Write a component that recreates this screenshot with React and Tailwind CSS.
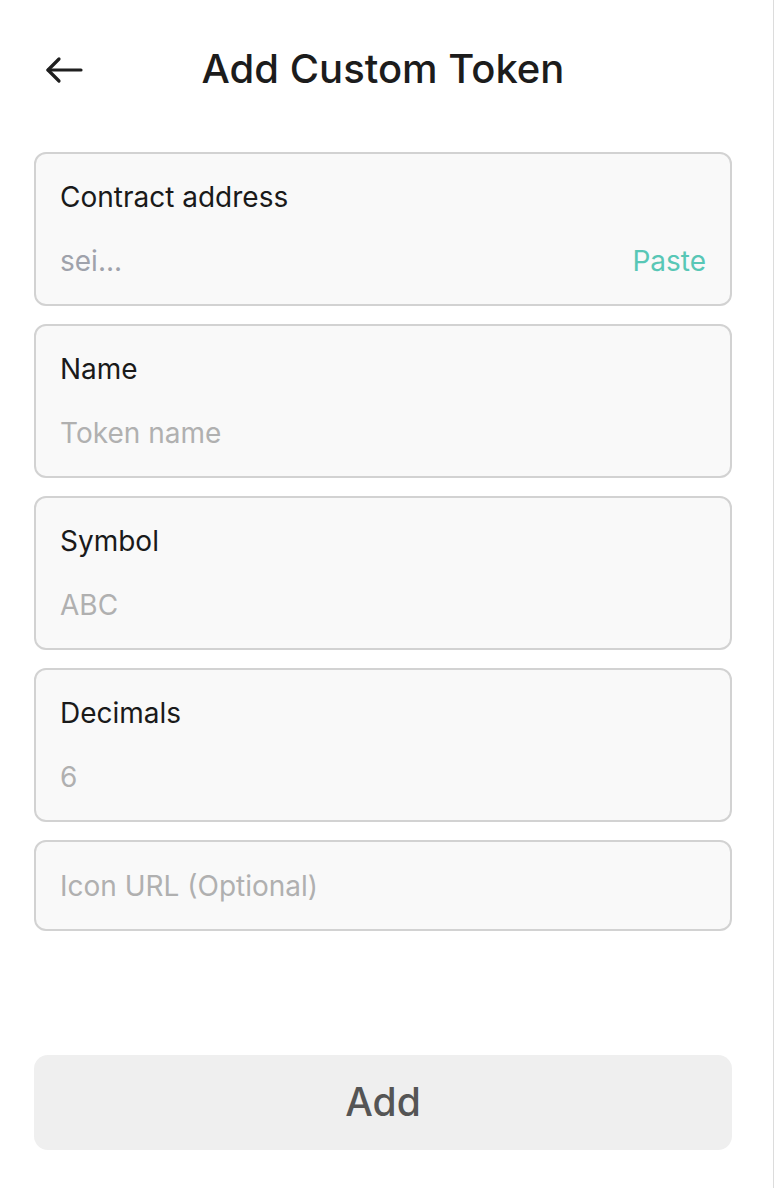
import { useState } from 'react';

const fields = [
  { label: 'Name', placeholder: 'Token name' },
  { label: 'Symbol', placeholder: 'ABC' },
  { label: 'Decimals', placeholder: '6' },
];

const BackArrow = () => (
  <svg width="40" height="30" viewBox="0 0 40 30" fill="none" stroke="#1f1f1f" strokeWidth="3.2" strokeLinecap="round" strokeLinejoin="round">
    <path d="M37 15H4" />
    <path d="M15 4L4 15l11 11" />
  </svg>
);

const App = () => {
  const [address, setAddress] = useState('');

  return (
    <div className="w-[774px] min-h-[1188px] bg-white border-r border-[#dcdcdc] font-['Inter',sans-serif] text-[#1a1a1a]">
      <div className="pl-[34px] pr-[41px]">
        <div className="relative flex items-center justify-center h-[140px] pb-[2px]">
          <button className="absolute left-[10px] top-[55px]">
            <BackArrow />
          </button>
          <h1 className="text-[40px] font-medium text-[#1c1c1c]">Add Custom Token</h1>
        </div>

        <div className="flex flex-col gap-[18px] mt-[12px]">
          <div className="h-[154px] rounded-[12px] border-2 border-[#d2d2d2] bg-[#f9f9f9] px-[24px] pt-[26px]">
            <div className="text-[28px] leading-[34px]">Contract address</div>
            <div className="flex items-center justify-between mt-[30px]">
              <input
                value={address}
                onChange={(e) => setAddress(e.target.value)}
                placeholder="sei..."
                className="bg-transparent outline-none text-[28px] leading-[34px] w-[400px] placeholder:text-[#9fa2ab]"
              />
              <span className="text-[28px] leading-[34px] text-[#58c7b6]">Paste</span>
            </div>
          </div>

          {fields.map((f) => (
            <div key={f.label} className="h-[154px] rounded-[12px] border-2 border-[#d2d2d2] bg-[#f9f9f9] px-[24px] pt-[26px]">
              <div className="text-[28px] leading-[34px]">{f.label}</div>
              <input
                placeholder={f.placeholder}
                className="mt-[30px] bg-transparent outline-none text-[28px] leading-[34px] w-full placeholder:text-[#b0b0b0]"
              />
            </div>
          ))}

          <div className="h-[91px] rounded-[12px] border-2 border-[#d2d2d2] bg-[#f9f9f9] px-[24px] flex items-center">
            <input
              placeholder="Icon URL (Optional)"
              className="bg-transparent outline-none text-[28px] leading-[34px] w-full placeholder:text-[#b0b0b0]"
            />
          </div>
        </div>

        <button className="mt-[124px] w-full h-[95px] rounded-[14px] bg-[#efefef] text-[39px] font-medium text-[#555555]">
          Add
        </button>
      </div>
    </div>
  );
};

export default App;
